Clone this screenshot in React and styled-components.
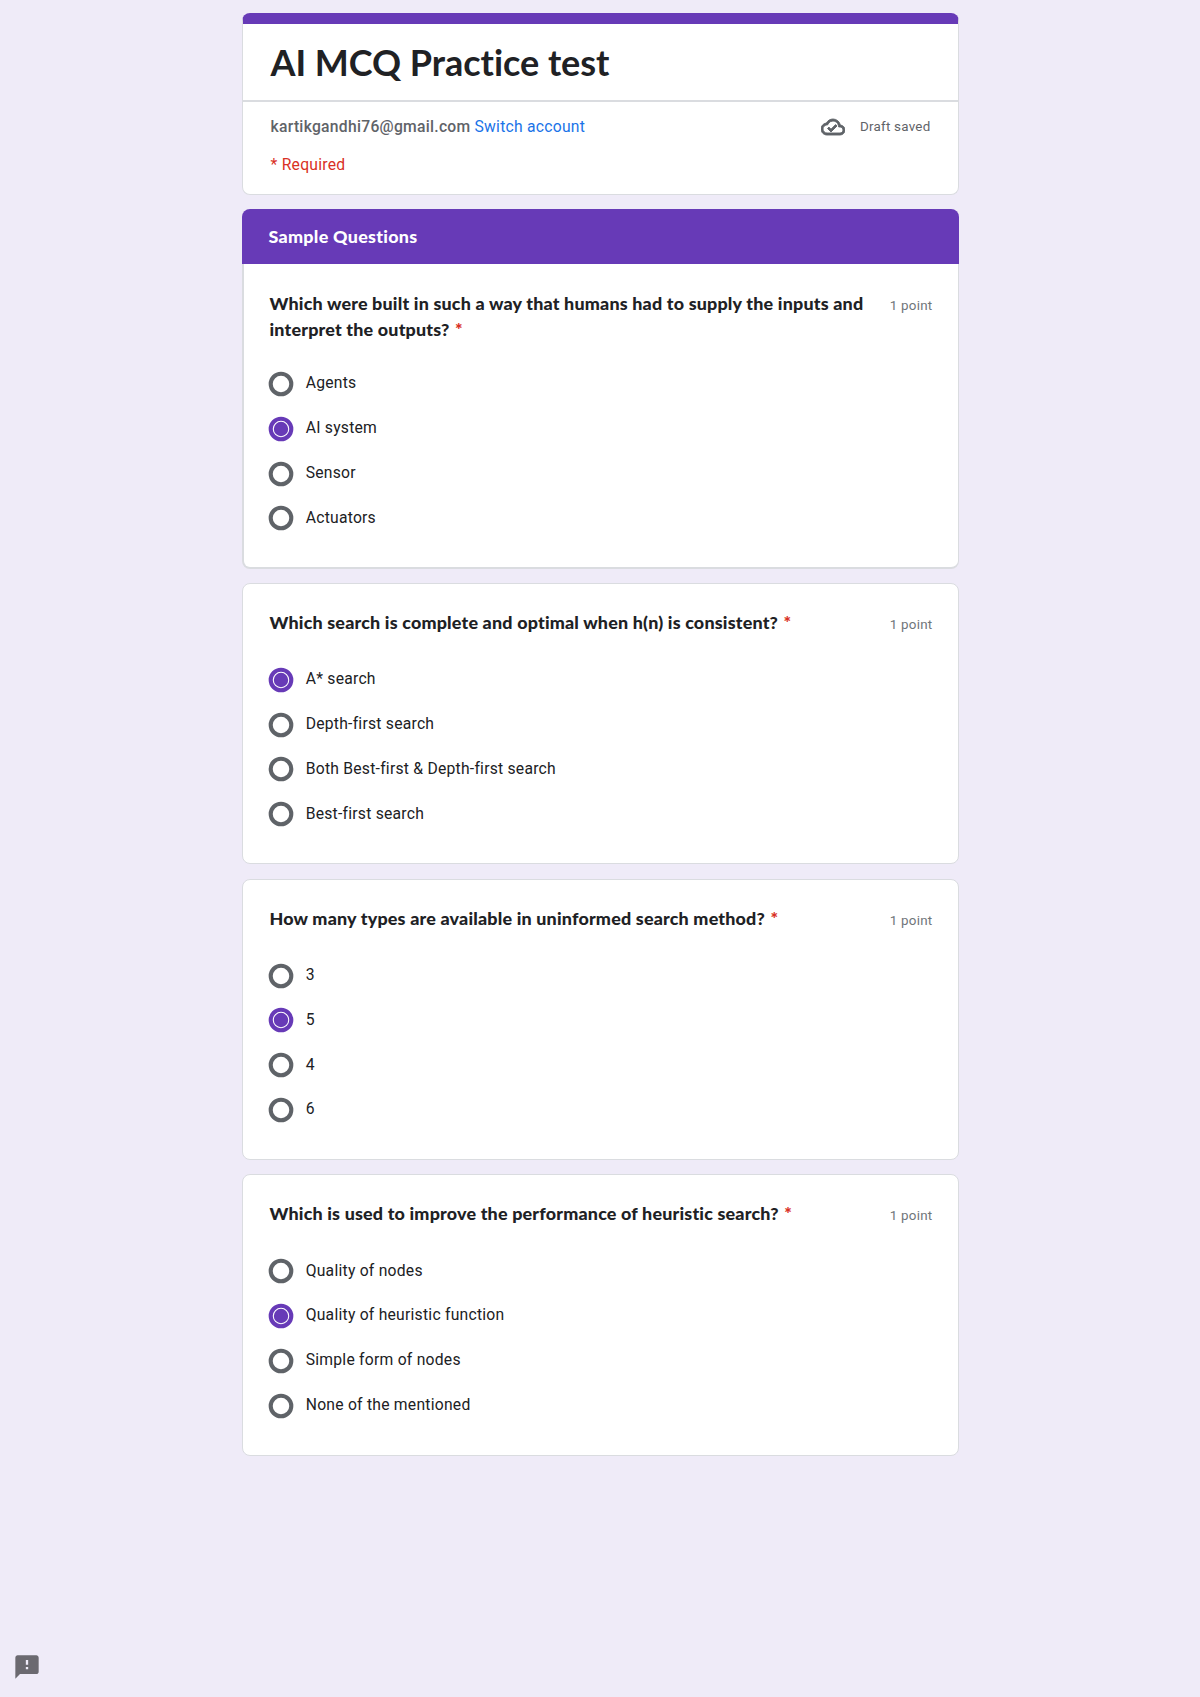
import React from "react";
import styled, { createGlobalStyle } from "styled-components";
import { MdFeedback, MdOutlineCloudDone } from "react-icons/md";

const questions = [
  {
    title:
      "Which were built in such a way that humans had to supply the inputs and interpret the outputs?",
    options: ["Agents", "AI system", "Sensor", "Actuators"],
    selected: 1,
  },
  {
    title: "Which search is complete and optimal when h(n) is consistent?",
    options: [
      "A* search",
      "Depth-first search",
      "Both Best-first & Depth-first search",
      "Best-first search",
    ],
    selected: 0,
  },
  {
    title: "How many types are available in uninformed search method?",
    options: ["3", "5", "4", "6"],
    selected: 1,
  },
  {
    title: "Which is used to improve the performance of heuristic search?",
    options: [
      "Quality of nodes",
      "Quality of heuristic function",
      "Simple form of nodes",
      "None of the mentioned",
    ],
    selected: 1,
  },
];

const Radio = ({ checked }) => (
  <RadioIcon viewBox="0 0 26 26" $checked={checked}>
    <circle cx="13" cy="13" r="10.3" fill="none" stroke="currentColor" strokeWidth="4.1" />
    {checked && <circle cx="13" cy="13" r="7.2" fill="currentColor" />}
  </RadioIcon>
);

const Question = ({ title, options, selected, first }) => (
  <Card $first={first}>
    <QuestionHead $first={first}>
      <QuestionTitle>
        {title} <Star>*</Star>
      </QuestionTitle>
      <Points>1 point</Points>
    </QuestionHead>
    <Options>
      {options.map((option, i) => (
        <Option key={option}>
          <Radio checked={i === selected} />
          <span>{option}</span>
        </Option>
      ))}
    </Options>
  </Card>
);

const App = () => {
  return (
    <>
      <GlobalStyle />
      <Page>
        <Form>
          <Header>
            <Title>AI MCQ Practice test</Title>
            <Account>
              <AccountRow>
                <Email>kartikgandhi76@gmail.com</Email>
                <SwitchLink>Switch account</SwitchLink>
                <Draft>
                  <MdOutlineCloudDone />
                  <span>Draft saved</span>
                </Draft>
              </AccountRow>
              <Required>* Required</Required>
            </Account>
          </Header>
          <Section>
            <SectionTitle>Sample Questions</SectionTitle>
            <Question {...questions[0]} first />
          </Section>
          {questions.slice(1).map((question) => (
            <Question key={question.title} {...question} />
          ))}
        </Form>
        <Feedback>
          <MdFeedback />
        </Feedback>
      </Page>
    </>
  );
};

export default App;

const GlobalStyle = createGlobalStyle`
  * {
    box-sizing: border-box;
  }
  body {
    margin: 0;
    background: #efebf8;
    color: #202124;
    font-family: Roboto, "Liberation Sans", sans-serif;
  }
`;

const Page = styled.main`
  position: relative;
  height: 1697px;
  padding-top: 13px;
  overflow: hidden;
`;

const Form = styled.div`
  width: 717px;
  margin: 0 auto;
  display: flex;
  flex-direction: column;
  gap: 14.1px;
`;

const Header = styled.header`
  height: 182.2px;
  background: #fff;
  border: 1px solid #dadce0;
  border-top: 11.6px solid #673ab7;
  border-radius: 8px;
`;

const Title = styled.h1`
  height: 78.4px;
  margin: 0;
  padding: 15px 28px 0;
  border-bottom: 2px solid #dadce0;
  font: 700 36px/46px Lato, "Liberation Sans", sans-serif;
  letter-spacing: -0.03px;
`;

const Account = styled.div`
  padding: 12.6px 27px 0 28px;
  font-size: 15.7px;
  letter-spacing: 0.25px;
`;

const AccountRow = styled.div`
  height: 24px;
  display: flex;
  align-items: center;
`;

const Email = styled.span`
  color: #5f6368;
  font-weight: 500;
  letter-spacing: 0.27px;
`;

const SwitchLink = styled.a`
  margin-left: 4px;
  color: #1a73e8;
`;

const Draft = styled.div`
  margin-left: auto;
  display: flex;
  align-items: center;
  gap: 15px;
  color: #5f6368;
  font-size: 13.4px;
  letter-spacing: 0.25px;

  svg {
    width: 24px;
    height: 24px;
    stroke: none;
    stroke-width: 0.9px;
  }

  path:last-child {
    stroke: currentColor;
  }
`;

const Required = styled.div`
  margin-top: 14px;
  line-height: 24px;
  color: #d93025;
`;

const Section = styled.section`
  display: flex;
  flex-direction: column;
`;

const SectionTitle = styled.h2`
  height: 55px;
  margin: 0;
  padding: 0 27px;
  border-radius: 8px 8px 0 0;
  background: #673ab7;
  color: #fff;
  font: 900 17.9px/55px Lato, "Liberation Sans", sans-serif;
  letter-spacing: 0.28px;
`;

const Card = styled.article`
  height: ${(props) => (props.$first ? "304.5px" : "281.6px")};
  padding: 25px 25px 0 26px;
  background: #fff;
  border: 1px solid #dadce0;
  border-radius: 8px;

  ${(props) =>
    props.$first &&
    `
    border-top: 0;
    border-left-width: 2px;
    border-bottom-width: 2px;
    border-radius: 0 0 8px 8px;
    padding-top: 26px;
    padding-left: 25px;
  `}
`;

const QuestionHead = styled.div`
  height: ${(props) => (props.$first ? "71.3px" : "48.6px")};
  display: flex;
  justify-content: space-between;
  align-items: flex-start;
`;

const QuestionTitle = styled.h3`
  width: 604px;
  margin: 0;
  padding-left: 1px;
  font: 900 17.9px/26px Lato, "Liberation Sans", sans-serif;
  letter-spacing: 0.19px;
`;

const Star = styled.span`
  margin-left: 1px;
  color: #d93025;
`;

const Points = styled.span`
  color: #70757a;
  font-size: 13.4px;
  line-height: 31px;
  letter-spacing: 0.25px;
`;

const Options = styled.div`
  display: flex;
  flex-direction: column;
`;

const Option = styled.label`
  height: 44.8px;
  display: flex;
  align-items: center;
  gap: 11.5px;
  font-size: 15.7px;
  letter-spacing: 0.24px;

  span {
    padding-bottom: 2.2px;
  }
`;

const RadioIcon = styled.svg`
  width: 26px;
  height: 26px;
  margin-left: -0.3px;
  color: ${(props) => (props.$checked ? "#673ab7" : "#5f6368")};
`;

const Feedback = styled.div`
  position: absolute;
  left: 13px;
  bottom: 16px;
  color: #6b6970;

  svg {
    display: block;
    width: 28px;
    height: 28px;
  }
`;
